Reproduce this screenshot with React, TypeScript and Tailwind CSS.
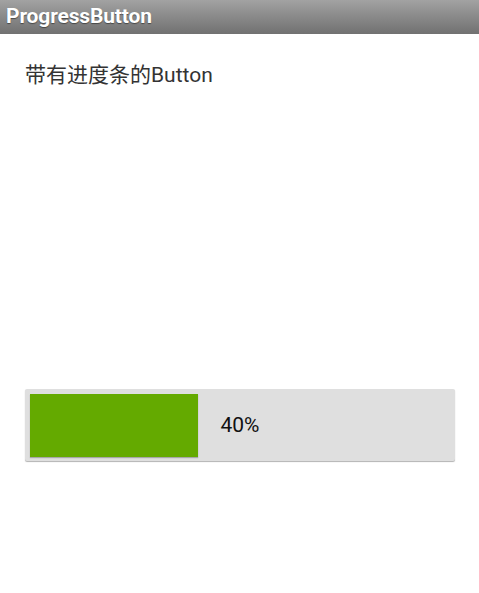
import React from "react";

const App: React.FC = () => {
  const progress = 40;

  return (
    <div className="w-[479px] h-[593px] bg-white font-['Roboto','Noto_Sans_CJK_SC',sans-serif]">
      {/* Action bar */}
      <div className="h-[34px] flex items-center px-[6px] bg-gradient-to-b from-[#a2a2a2] to-[#717171]">
        <span className="text-white text-[21px] font-bold tracking-[-0.15px] [text-shadow:0_1px_1px_rgba(0,0,0,0.45)]">
          ProgressButton
        </span>
      </div>

      {/* Content */}
      <div className="px-[25px] pt-[27px]">
        <p className="text-[21px] leading-[28px] text-[#333333]">带有进度条的Button</p>

        {/* Progress button */}
        <div className="relative mt-[300px] w-[430px] h-[72px] bg-[#dfdfdf] rounded-[2px] shadow-[0_1px_1px_rgba(0,0,0,0.3)] pt-[5px] pb-[4px] px-[5px]">
          <div className="h-full w-[420px] flex">
            <div
              className="h-full bg-[#64aa00] shadow-[0_1px_1px_rgba(0,0,0,0.25)]"
              style={{ width: `${progress}%` }}
            />
          </div>
          <div className="absolute inset-0 flex items-center justify-center pt-[2px]">
            <span className="text-[21px] text-[#111111]">{progress}%</span>
          </div>
        </div>
      </div>
    </div>
  );
};

export default App;
